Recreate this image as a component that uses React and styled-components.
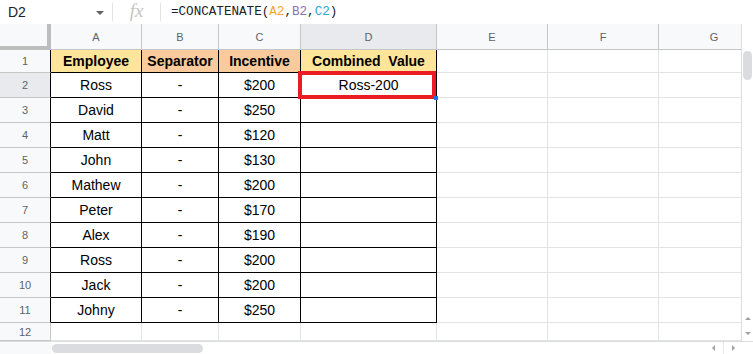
import React from 'react';
import styled, { createGlobalStyle, css } from 'styled-components';

const GlobalStyle = createGlobalStyle`
  body {
    margin: 0;
    background: #ffffff;
    overflow: hidden;
  }
`;

// Styled components
const Frame = styled.div`
  width: 753px;
  height: 354px;
  overflow: hidden;
  background: #ffffff;
  font-family: 'Liberation Sans', Arial, sans-serif;
  display: flex;
  flex-direction: column;
`;

const FormulaBar = styled.div`
  height: 24px;
  display: flex;
  align-items: center;
  flex-shrink: 0;
`;

const NameBox = styled.div`
  width: 112px;
  box-sizing: border-box;
  padding-left: 8px;
  font-size: 14px;
  color: #202124;
  display: flex;
  align-items: center;
  justify-content: space-between;
  padding-right: 8px;
`;

const Caret = styled.span`
  width: 0;
  height: 0;
  border-left: 4px solid transparent;
  border-right: 4px solid transparent;
  border-top: 4px solid #5f6368;
  margin-top: 2px;
`;

const Divider = styled.div`
  width: 1px;
  height: 18px;
  background: #e3e3e3;
`;

const FxLabel = styled.div`
  width: 47px;
  text-align: center;
  font-family: 'Liberation Serif', 'Times New Roman', serif;
  font-style: italic;
  font-size: 19px;
  color: #c4c4c4;
  margin-top: -3px;
`;

const Formula = styled.div`
  padding-left: 10px;
  font-family: 'Liberation Mono', 'Courier New', monospace;
  font-size: 12.6px;
  color: #202124;
`;

const Ref = styled.span`
  color: ${(p) => p.$color};
`;

const Main = styled.div`
  display: flex;
  height: 317px;
  flex-shrink: 0;
`;

const Grid = styled.div`
  width: 741px;
  overflow: hidden;
  display: grid;
  grid-template-columns: 51px 91px 77px 82px 136px 111px 111px 111px;
  grid-template-rows: 26px 23px repeat(10, 25px) 18px;
`;

const Cell = styled.div`
  box-sizing: border-box;
  border-right: 1px solid #e2e3e3;
  border-bottom: 1px solid #e2e3e3;
  display: flex;
  align-items: center;
  justify-content: center;
  font-size: 14px;
  color: #000000;
  white-space: pre;
  background: ${(p) => p.$bg || '#ffffff'};
  ${(p) => p.$bold && css`font-weight: bold;`}
  ${(p) =>
    p.$boxed &&
    css`
      border-right-color: #000000;
      border-bottom-color: #000000;
    `}
  ${(p) =>
    p.$selected &&
    css`
      position: relative;
      z-index: 2;
      &::after {
        content: '';
        position: absolute;
        top: -2px;
        left: -3px;
        right: 0;
        bottom: -2px;
        border: 4px solid #ec1c24;
      }
      &::before {
        content: '';
        position: absolute;
        right: -2px;
        bottom: -3px;
        width: 4px;
        height: 4px;
        background: #1a73e8;
        z-index: 3;
      }
    `}
`;

const HeaderCell = styled.div`
  box-sizing: border-box;
  background: ${(p) => (p.$active ? '#e8eaed' : '#f8f9fa')};
  border-right: 1px solid ${(p) => (p.$edge ? '#000000' : '#c4c7c5')};
  border-bottom: 1px solid #c4c7c5;
  display: flex;
  align-items: center;
  justify-content: center;
  font-family: 'Liberation Sans', Arial, sans-serif;
  font-size: 11px;
  color: #5f6368;
`;

const Corner = styled.div`
  box-sizing: border-box;
  background: #f8f9fa;
  border-right: 4px solid #bdbdbd;
  border-bottom: 4px solid #bdbdbd;
`;

const VScroll = styled.div`
  width: 12px;
  box-sizing: border-box;
  border-left: 1px solid #dadce0;
  display: flex;
  flex-direction: column;
  align-items: center;
  padding-top: 27px;
`;

const Thumb = styled.div`
  background: #dadce0;
  border-radius: 5px;
  ${(p) =>
    p.$vertical
      ? css`
          width: 9px;
          height: 29px;
        `
      : css`
          width: 151px;
          height: 9px;
        `}
`;

const VArrows = styled.div`
  margin-top: auto;
  display: flex;
  flex-direction: column;
  align-items: center;
  gap: 12px;
  padding-bottom: 6px;
`;

const Arrow = styled.span`
  width: 0;
  height: 0;
  ${(p) =>
    p.$dir === 'up' &&
    css`
      border-left: 3px solid transparent;
      border-right: 3px solid transparent;
      border-bottom: 3px solid #a0a0a0;
    `}
  ${(p) =>
    p.$dir === 'down' &&
    css`
      border-left: 3px solid transparent;
      border-right: 3px solid transparent;
      border-top: 3px solid #a0a0a0;
    `}
  ${(p) =>
    p.$dir === 'left' &&
    css`
      border-top: 3px solid transparent;
      border-bottom: 3px solid transparent;
      border-right: 3px solid #a0a0a0;
    `}
  ${(p) =>
    p.$dir === 'right' &&
    css`
      border-top: 3px solid transparent;
      border-bottom: 3px solid transparent;
      border-left: 3px solid #a0a0a0;
    `}
`;

const BottomBar = styled.div`
  height: 13px;
  box-sizing: border-box;
  border-top: 1px solid #dadce0;
  display: flex;
  align-items: center;
`;

const Stub = styled.div`
  width: 51px;
  height: 100%;
  background: #f8f9fa;
  flex-shrink: 0;
`;

const Track = styled.div`
  flex: 1;
  padding-left: 1px;
  display: flex;
  align-items: center;
`;

const HArrows = styled.div`
  display: flex;
  align-items: center;
  gap: 8px;
  padding-right: 18px;
`;

const ArrowDivider = styled.div`
  width: 1px;
  height: 12px;
  background: #e8e8e8;
`;

const columns = ['A', 'B', 'C', 'D', 'E', 'F', 'G'];

const rows = [
  ['Ross', '-', '$200', 'Ross-200'],
  ['David', '-', '$250', ''],
  ['Matt', '-', '$120', ''],
  ['John', '-', '$130', ''],
  ['Mathew', '-', '$200', ''],
  ['Peter', '-', '$170', ''],
  ['Alex', '-', '$190', ''],
  ['Ross', '-', '$200', ''],
  ['Jack', '-', '$200', ''],
  ['Johny', '-', '$250', ''],
];

const headers = [
  { label: 'Employee', bg: '#ffe599' },
  { label: 'Separator', bg: '#f9cb9c' },
  { label: 'Incentive', bg: '#f9cb9c' },
  { label: 'Combined  Value', bg: '#ffe599' },
];

const App = () => (
  <Frame>
    <GlobalStyle />
    <FormulaBar>
      <NameBox>
        D2
        <Caret />
      </NameBox>
      <Divider />
      <FxLabel>fx</FxLabel>
      <Divider />
      <Formula>
        =CONCATENATE(<Ref $color="#f4a534">A2</Ref>,<Ref $color="#8e6fb0">B2</Ref>,
        <Ref $color="#2fa8d6">C2</Ref>)
      </Formula>
    </FormulaBar>

    <Main>
      <Grid>
        <Corner />
        {columns.map((c) => (
          <HeaderCell key={c} $active={c === 'D'}>
            {c}
          </HeaderCell>
        ))}

        {/* Row 1: table headings */}
        <HeaderCell $edge>1</HeaderCell>
        {headers.map((h) => (
          <Cell key={h.label} $bg={h.bg} $bold $boxed>
            {h.label}
          </Cell>
        ))}
        <Cell />
        <Cell />
        <Cell />

        {/* Rows 2-11: data */}
        {rows.map((r, i) => (
          <React.Fragment key={i}>
            <HeaderCell $edge $active={i === 0}>
              {i + 2}
            </HeaderCell>
            {r.map((v, j) => (
              <Cell key={j} $boxed $selected={i === 0 && j === 3}>
                {v}
              </Cell>
            ))}
            <Cell />
            <Cell />
            <Cell />
          </React.Fragment>
        ))}

        {/* Row 12: empty */}
        <HeaderCell>12</HeaderCell>
        {columns.map((c) => (
          <Cell key={c} />
        ))}
      </Grid>
      <VScroll>
        <Thumb $vertical />
        <VArrows>
          <Arrow $dir="up" />
          <Arrow $dir="down" />
        </VArrows>
      </VScroll>
    </Main>

    <BottomBar>
      <Stub />
      <Track>
        <Thumb />
      </Track>
      <HArrows>
        <Arrow $dir="left" />
        <ArrowDivider />
        <Arrow $dir="right" />
      </HArrows>
    </BottomBar>
  </Frame>
);

export default App;
